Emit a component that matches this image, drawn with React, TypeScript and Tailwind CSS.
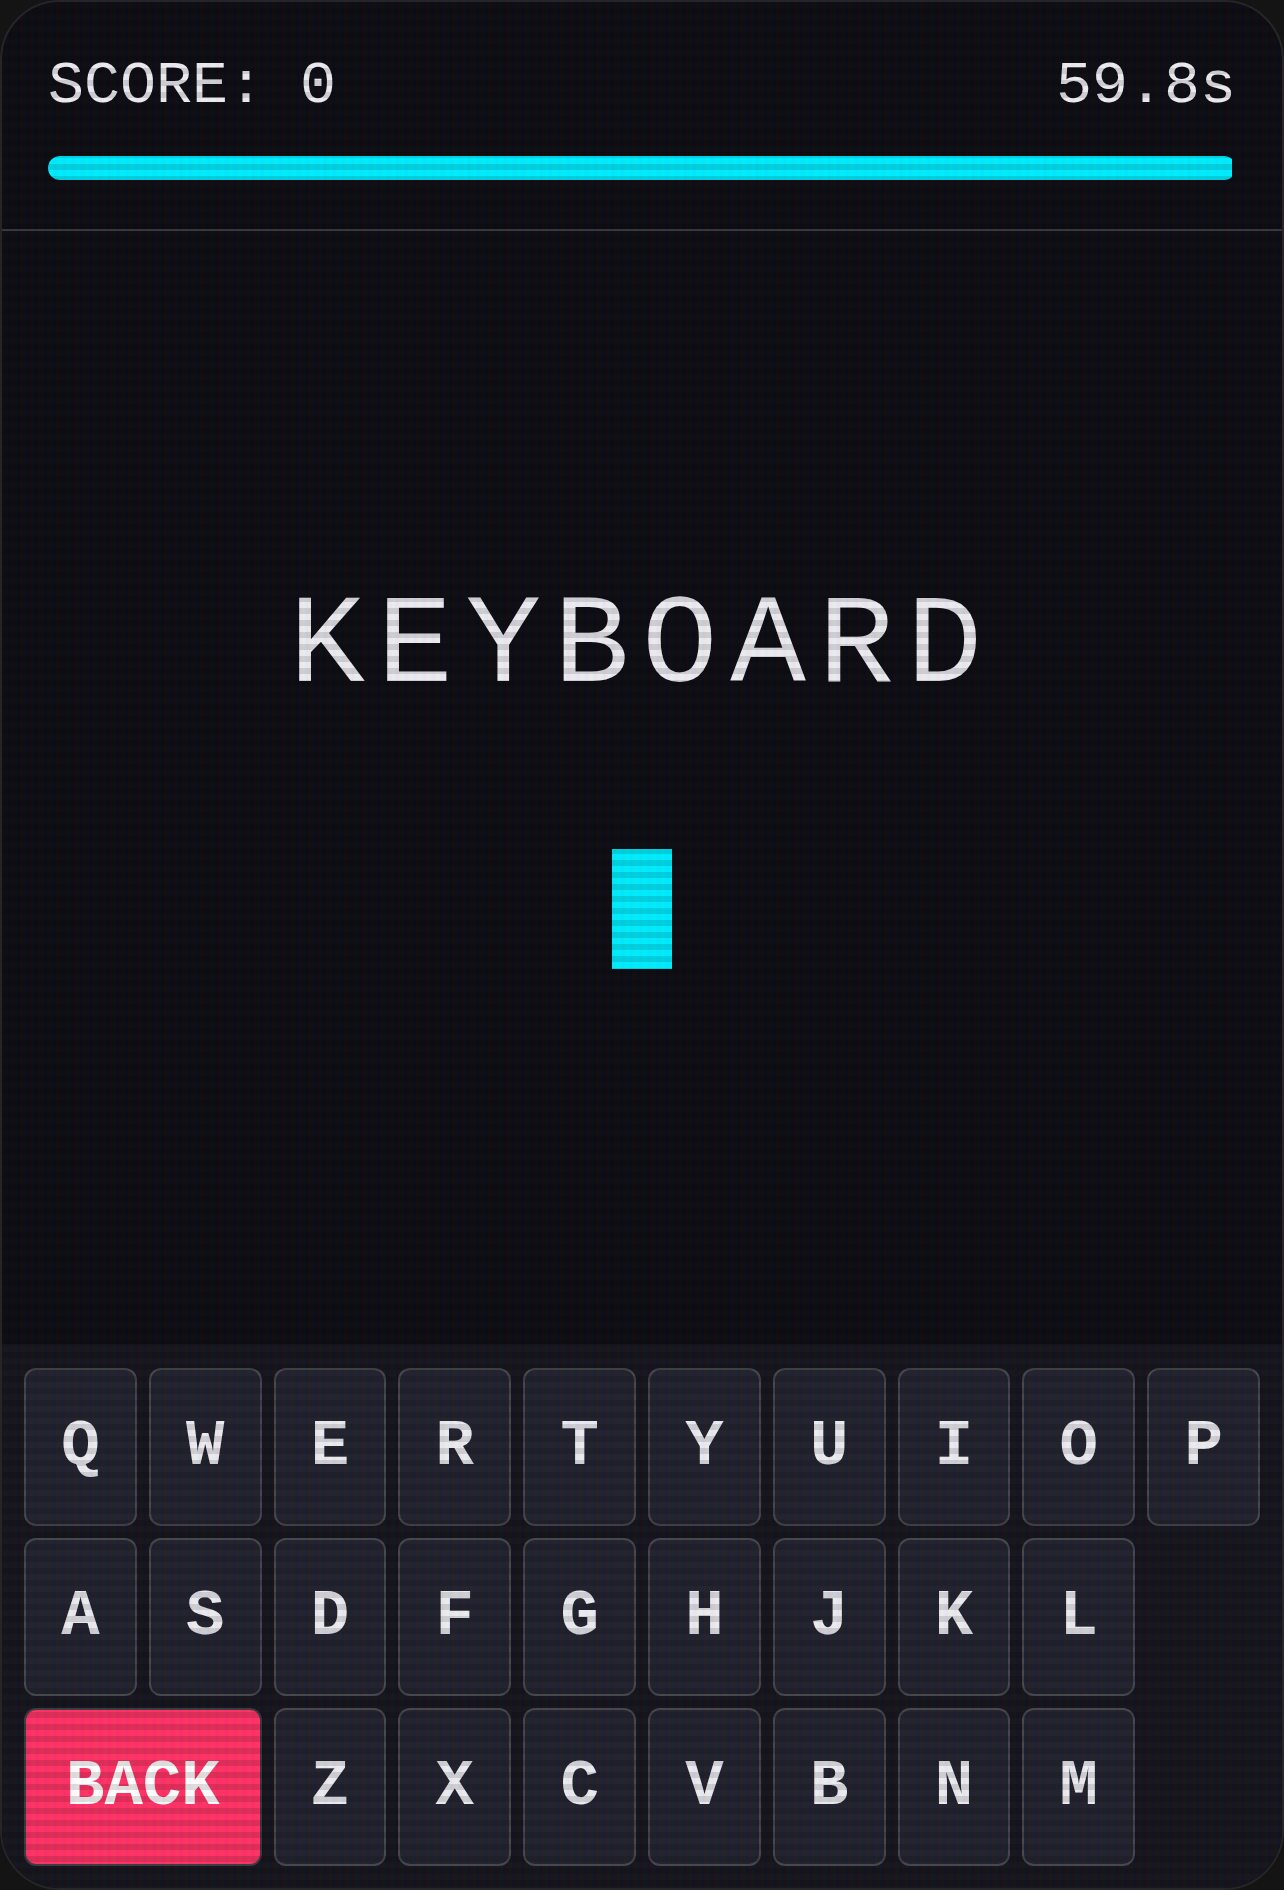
import React from 'react'

// 打字小游戏的单屏：顶部分数 + 倒计时条，中间目标单词 + 光标，底部虚拟键盘。
// 整页盖一层 CRT 扫描线。

const TOTAL_SECONDS = 60
const TIME_LEFT = 59.8

const ROWS: string[][] = [
  ['Q', 'W', 'E', 'R', 'T', 'Y', 'U', 'I', 'O', 'P'],
  ['A', 'S', 'D', 'F', 'G', 'H', 'J', 'K', 'L'],
  ['Z', 'X', 'C', 'V', 'B', 'N', 'M'],
]

export default function App(): JSX.Element {
  const pct = (TIME_LEFT / TOTAL_SECONDS) * 100
  return (
    <div className="w-[1284px] h-[1890px] bg-[#141414] font-['Liberation_Mono',monospace]">
      <div className="relative w-full h-full rounded-[60px] border-2 border-[#262628] overflow-hidden bg-[#0d0d13] flex flex-col">
        {/* 顶栏 */}
        <div className="px-[46px] pt-[48px] pb-[49px] border-b-2 border-[#3a3a3f]">
          <div className="flex items-start justify-between text-[60px] leading-[72px] text-[#ececf1]">
            <span>SCORE: 0</span>
            <span>{TIME_LEFT.toFixed(1)}s</span>
          </div>
          <div className="mt-[34px] h-[24px] rounded-full overflow-hidden">
            <div className="h-full bg-[#00eeff]" style={{ width: `${pct}%` }} />
          </div>
        </div>

        {/* 单词 + 光标 */}
        <div className="flex-1 flex flex-col items-center justify-center pb-[21px]">
          <div className="text-[126px] leading-[126px] tracking-[12.6px] text-[#ececf1]">KEYBOARD</div>
          <div className="mt-[138px] w-[60px] h-[120px] bg-[#00eeff]" />
        </div>

        {/* 键盘 */}
        <div className="bg-[#16161e] px-[22px] pt-[24px] pb-[22px] flex flex-col gap-[12px]">
          {ROWS.map((row, i) => (
            <div key={i} className="grid grid-cols-10 gap-[12px]">
              {i === 2 && (
                <div className="col-span-2 h-[158px] rounded-[12px] border-2 border-[#3c3c40] bg-[#ff3366] flex items-center justify-center text-[64px] font-bold text-white">
                  BACK
                </div>
              )}
              {row.map(k => (
                <div
                  key={k}
                  className="h-[158px] rounded-[12px] border-2 border-[#47474d] bg-[#22232f] flex items-center justify-center text-[64px] font-bold text-[#ececf1]"
                >
                  {k}
                </div>
              ))}
            </div>
          ))}
        </div>

        {/* CRT 扫描线 */}
        <div className="pointer-events-none absolute inset-0 bg-[linear-gradient(rgba(18,16,16,0)_50%,rgba(0,0,0,0.12)_50%),linear-gradient(90deg,rgba(255,0,0,0.04),rgba(0,255,0,0.015),rgba(0,0,255,0.04))] bg-[length:100%_12px,9px_100%]" />
      </div>
    </div>
  )
}
